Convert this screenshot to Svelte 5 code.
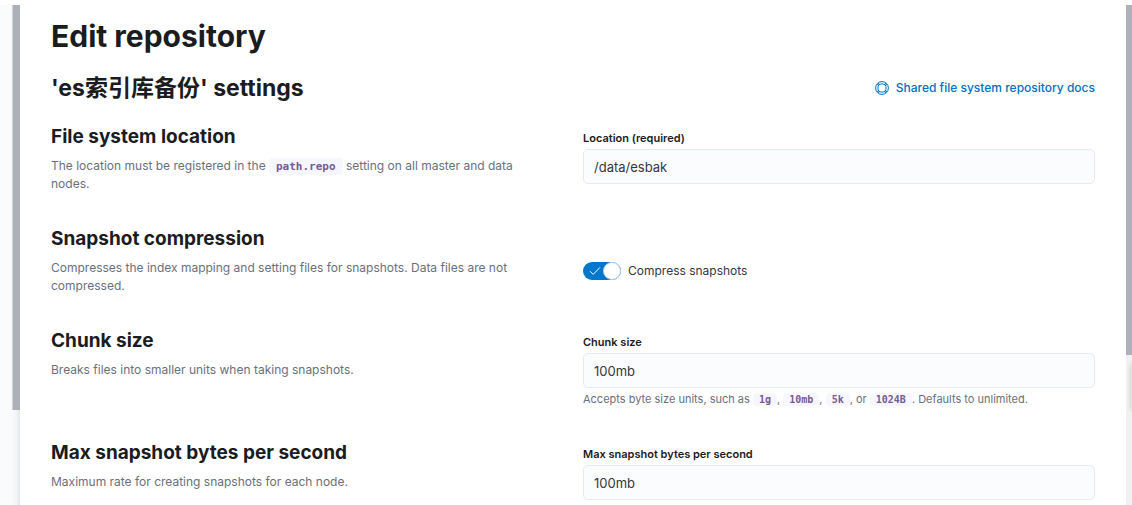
<script>
    let compress = true
    let groups = [
        {
            id: 'location',
            title: 'File system location',
            text: ['The location must be registered in the ', { code: 'path.repo' }, ' setting on all master and data nodes.'],
            label: 'Location (required)',
            value: '/data/esbak',
            help: []
        },
        {
            id: 'compress',
            title: 'Snapshot compression',
            text: ['Compresses the index mapping and setting files for snapshots. Data files are not compressed.'],
            toggle: 'Compress snapshots'
        },
        {
            id: 'chunk',
            title: 'Chunk size',
            text: ['Breaks files into smaller units when taking snapshots.'],
            label: 'Chunk size',
            value: '100mb',
            help: ['Accepts byte size units, such as ', { code: '1g' }, ', ', { code: '10mb' }, ', ', { code: '5k' }, ', or ', { code: '1024B' }, '. Defaults to unlimited.']
        },
        {
            id: 'max-snapshot',
            title: 'Max snapshot bytes per second',
            text: ['Maximum rate for creating snapshots for each node.'],
            label: 'Max snapshot bytes per second',
            value: '100mb',
            help: ['Accepts byte size units, such as ', { code: '1g' }, ', ', { code: '10mb' }, ', ', { code: '5k' }, ', or ', { code: '1024B' }, '. Defaults to ', { code: '40mb' }, ' per second.']
        }
    ]
</script>

<div class="page">
    <div class="side">
        <div class="thumb side-thumb"></div>
    </div>
    <main>
        <h1>Edit repository</h1>
        <div class="subtitle">
            <h2>'es索引库备份' settings</h2>
            <a href="#docs">
                <svg width="14" height="14" viewBox="0 0 14 14" fill="none" stroke="currentColor">
                    <circle cx="7" cy="7" r="6.4" />
                    <circle cx="7" cy="7" r="4.1" />
                    <path d="M1.9 3.4L3.9 4.4M3.4 1.9L4.4 3.9M12.1 3.4L10.1 4.4M10.6 1.9L9.6 3.9M1.9 10.6L3.9 9.6M3.4 12.1L4.4 10.1M12.1 10.6L10.1 9.6M10.6 12.1L9.6 10.1" />
                </svg>
                Shared file system repository docs
            </a>
        </div>
        <form>
            {#each groups as group}
                <section>
                    <div class="about">
                        <h3>{group.title}</h3>
                        <p>{#each group.text as part}{#if part.code}<code>{part.code}</code>{:else}{part}{/if}{/each}</p>
                    </div>
                    {#if group.toggle}
                        <label class="toggle">
                            <span class="switch">
                                <input type="checkbox" role="switch" bind:checked={compress}>
                                <svg width="12" height="10" viewBox="0 0 12 10" fill="none" stroke="#fff">
                                    <path d="M1 5.2L4.2 8.4L11 1.4" />
                                </svg>
                            </span>
                            {group.toggle}
                        </label>
                    {:else}
                        <div class="field">
                            <label for={group.id}>{group.label}</label>
                            <input id={group.id} type="text" bind:value={group.value}>
                            {#if group.help.length}
                                <p class="help">{#each group.help as part}{#if part.code}<code>{part.code}</code>{:else}{part}{/if}{/each}</p>
                            {/if}
                        </div>
                    {/if}
                </section>
            {/each}
        </form>
    </main>
    <div class="rail">
        <div class="thumb rail-thumb"></div>
        <div class="widget"></div>
    </div>
</div>

<style>
    :global(body) {
        background-color: #fff;
    }
    .page {
        box-sizing: border-box;
        display: grid;
        grid-template-columns: 20px 1fr 6px;
        grid-template-rows: 100%;
        height: 100vh;
        padding-top: 5px;
        overflow: hidden;
        font-family: Inter, "Noto Sans CJK SC", sans-serif;
        font-size: 12px;
        line-height: 18px;
        color: #343741;
    }
    .side {
        display: flex;
        justify-content: flex-end;
        background: linear-gradient(to right, #fafbfd 10px, #f4f5f7 16px, #e4e6e9);
    }
    .thumb {
        background-color: #abb0b9;
    }
    .side-thumb {
        box-sizing: border-box;
        width: 8px;
        height: 81%;
        border-left: 1px solid #d0d3d8;
    }
    .rail {
        background-color: #f1f1f4;
        overflow: hidden;
    }
    .rail-thumb {
        height: 70%;
        background-color: #aeb0ba;
    }
    .widget {
        width: 40px;
        height: 48px;
        margin: 8px 0 0 5px;
        border-radius: 4px;
        background-color: #dcebe3;
        box-shadow: 0 0 4px #c4c5c9;
    }
    main {
        min-width: 0;
        padding: 11px 31px 0;
        background-color: #fff;
    }
    h1, h2, h3, p {
        margin: 0;
    }
    h1, h2, h3 {
        color: #1a1c21;
        font-weight: 700;
    }
    h1 {
        font-size: 30px;
        line-height: 40px;
    }
    h2 {
        font-size: 23px;
        line-height: 32px;
    }
    h3 {
        font-size: 19px;
        line-height: 28px;
        margin-bottom: 6px;
    }
    .subtitle {
        display: flex;
        align-items: center;
        justify-content: space-between;
        margin: 16px 0 19px;
    }
    a {
        display: flex;
        align-items: center;
        gap: 7px;
        color: #0071c2;
        font-weight: 500;
        text-decoration: none;
    }
    a:hover {
        text-decoration: underline;
    }
    form {
        display: grid;
        gap: 32px;
    }
    section {
        display: grid;
        grid-template-columns: 1fr 1fr;
        gap: 20px;
        align-items: start;
    }
    .about {
        padding-right: 24px;
    }
    .about p, .help {
        color: #69707d;
    }
    code {
        padding: 2px 7px;
        border-radius: 4px;
        background-color: #f5f7fc;
        color: #765b96;
        font-family: "DejaVu Sans Mono", monospace;
        font-size: 11px;
        font-weight: 700;
        line-height: 1;
    }
    .field {
        display: grid;
        padding-top: 9px;
    }
    .field label {
        margin-bottom: 5px;
        color: #1a1c21;
        font-size: 11px;
        font-weight: 600;
        line-height: 12px;
    }
    .field input {
        box-sizing: border-box;
        width: 100%;
        height: 35px;
        padding: 0 10px;
        border: 1px solid #e6e9f1;
        border-radius: 5px;
        background-color: #fbfcfe;
        color: #343741;
        font: inherit;
        font-size: 13px;
    }
    .help {
        margin-top: 3px;
        font-size: 11px;
        line-height: 16px;
    }
    .help code {
        padding: 1px 6px;
        font-size: 10px;
    }
    .toggle {
        display: flex;
        align-items: center;
        gap: 7px;
        padding-top: 37px;
    }
    .switch {
        position: relative;
        width: 38px;
        height: 18px;
    }
    .switch input {
        appearance: none;
        display: flex;
        width: 100%;
        height: 100%;
        margin: 0;
        border-radius: 9px;
        background-color: #98a2b3;
    }
    .switch input::before {
        content: '';
        box-sizing: border-box;
        width: 18px;
        height: 18px;
        border: 1px solid #b9d3ea;
        border-radius: 100%;
        background-color: #fff;
    }
    .switch input:checked {
        justify-content: flex-end;
        background-color: #0077cc;
    }
    .switch svg {
        position: absolute;
        left: 6px;
        top: 4px;
        pointer-events: none;
    }
</style>
